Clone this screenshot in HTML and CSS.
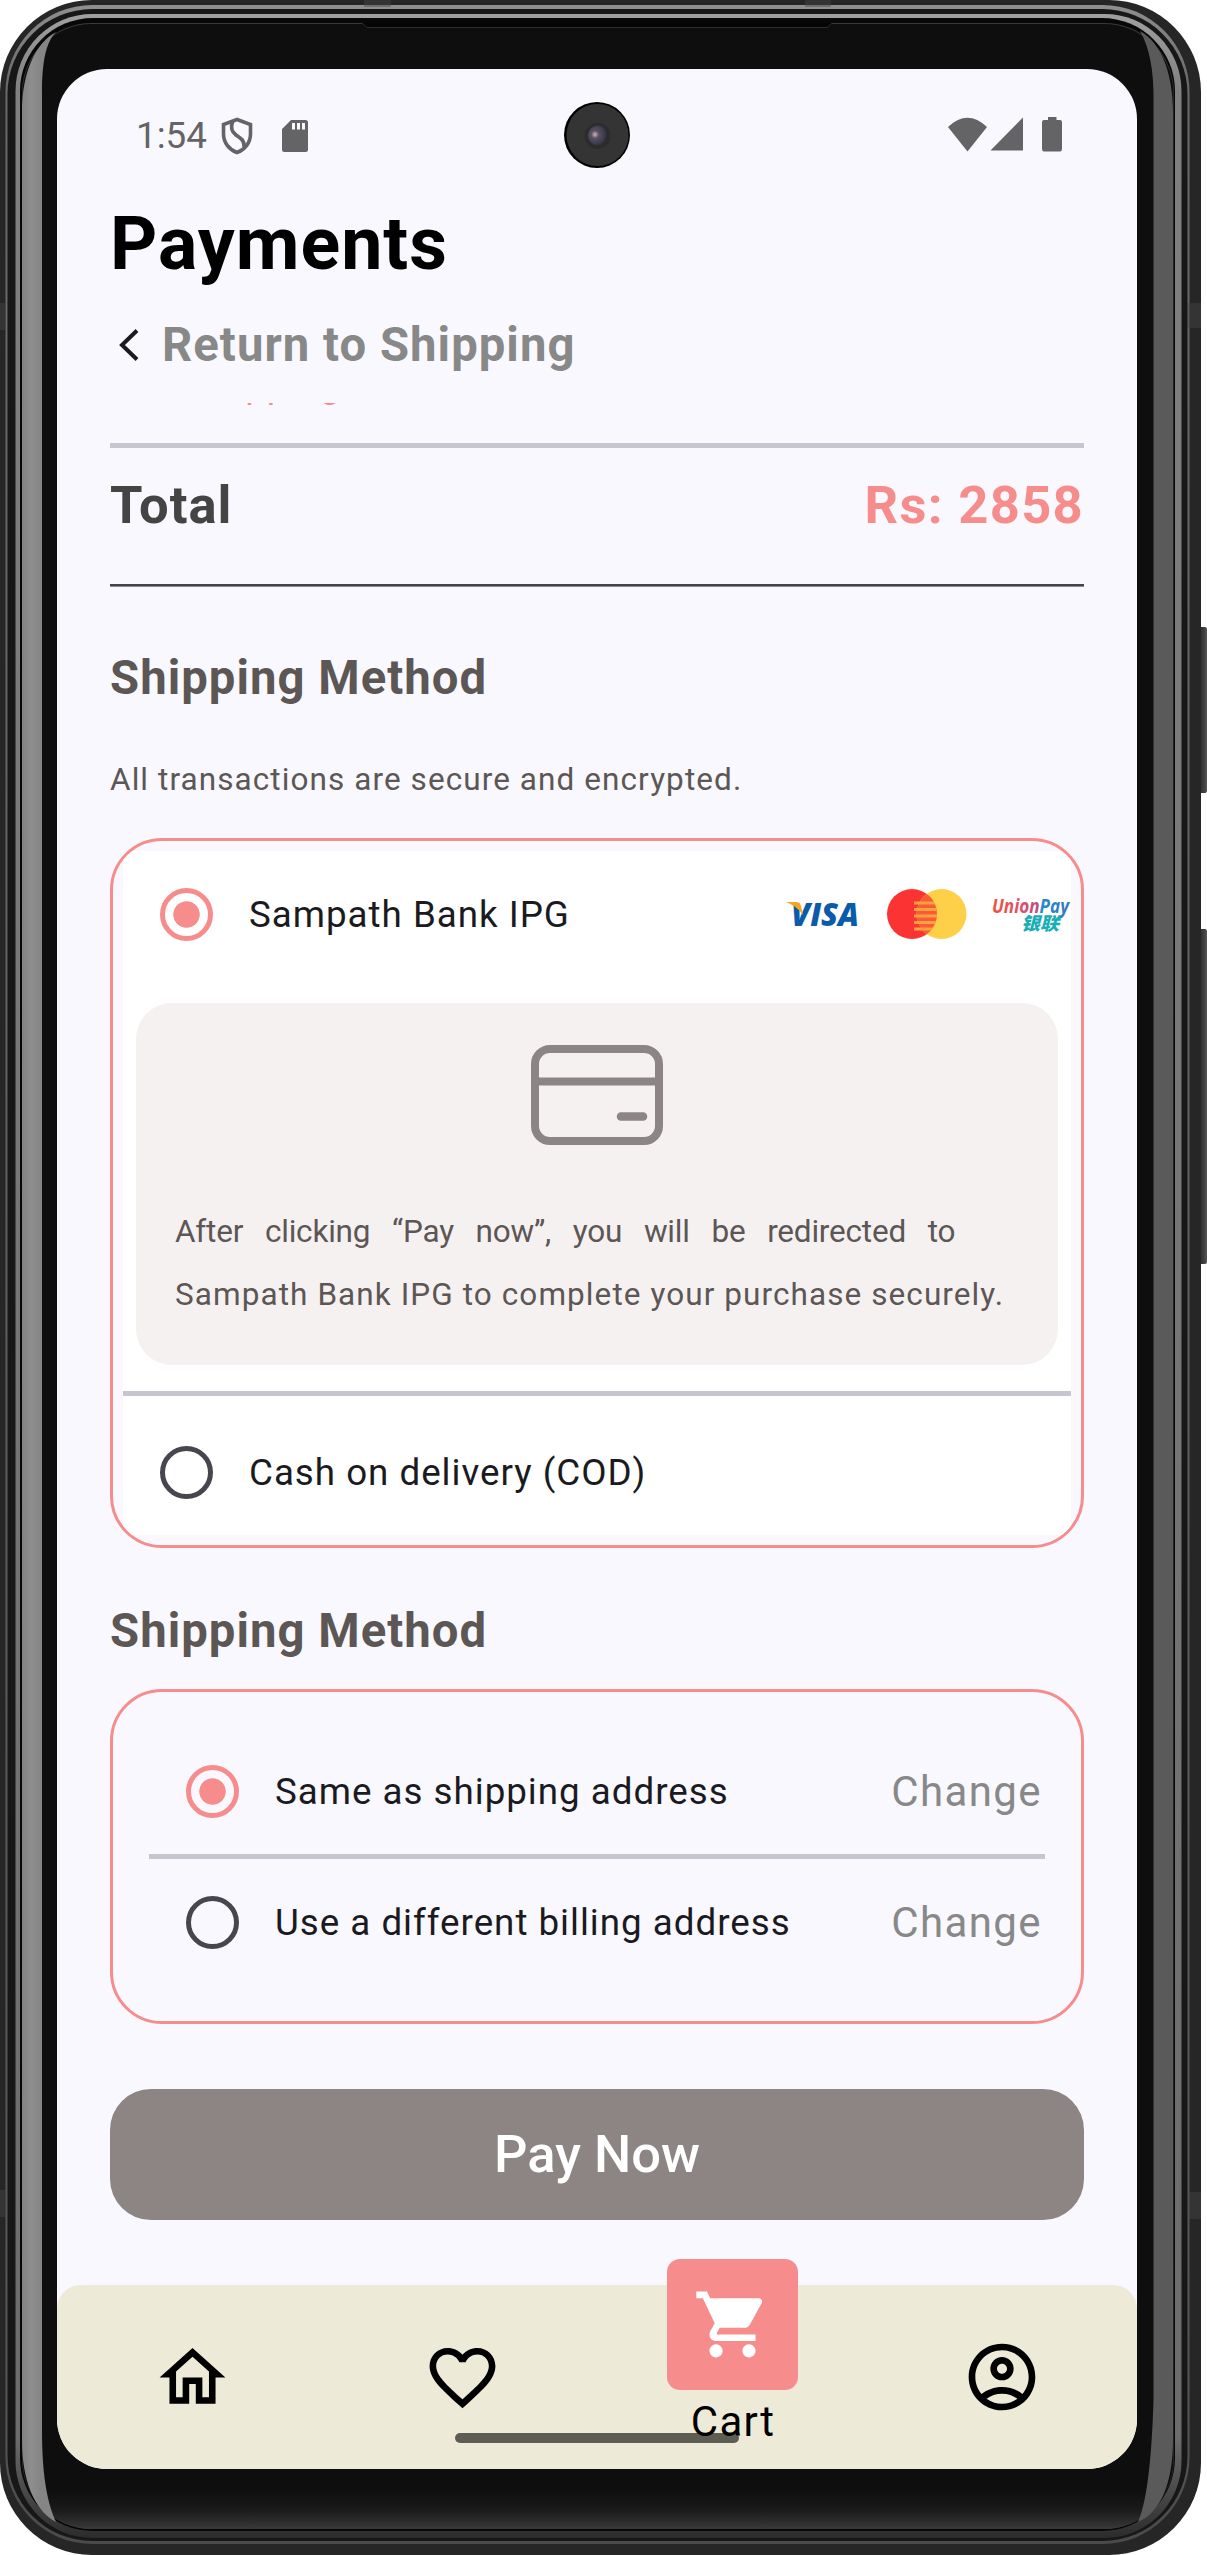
FILE: index.html
```html
<!DOCTYPE html>
<html lang="en">
<head>
<meta charset="utf-8">
<title>Payments</title>
<link rel="stylesheet" href="styles.css">
</head>
<body>
<div class="device">
  <svg class="frame" width="1207" height="2555" viewBox="0 0 1207 2555" aria-hidden="true">
    <defs>
      <linearGradient id="rim" x1="0" x2="0" y1="0" y2="1">
        <stop offset="0" stop-color="#8f8f8f"/><stop offset=".03" stop-color="#6a6a6a"/><stop offset=".96" stop-color="#555"/><stop offset="1" stop-color="#4a4a4a"/>
      </linearGradient>
      <linearGradient id="rim2" x1="0" x2="0" y1="0" y2="1">
        <stop offset="0" stop-color="#a0a0a0"/><stop offset=".03" stop-color="#808080"/><stop offset=".96" stop-color="#6c6c6c"/><stop offset="1" stop-color="#2c2c2c"/>
      </linearGradient>
      <linearGradient id="glass" x1="0" x2="0" y1="2490" y2="2530" gradientUnits="userSpaceOnUse">
        <stop offset="0" stop-color="#0e0e0e"/><stop offset=".5" stop-color="#1a1a1a"/><stop offset="1" stop-color="#3a3a3a"/>
      </linearGradient>
      <linearGradient id="left" x1="22" x2="41" y1="0" y2="0" gradientUnits="userSpaceOnUse">
        <stop offset="0" stop-color="#828282"/><stop offset=".5" stop-color="#8e8e8e"/><stop offset="1" stop-color="#858585"/>
      </linearGradient>
      <linearGradient id="key" x1="0" x2="1" y1="0" y2="0">
        <stop offset="0" stop-color="#1c1c1c"/><stop offset=".7" stop-color="#3a3a3a"/><stop offset="1" stop-color="#555"/>
      </linearGradient>
    </defs>
    <rect x="1194" y="627" width="13" height="166" rx="2" fill="url(#key)"/>
    <rect x="1194" y="929" width="13" height="335" rx="2" fill="url(#key)"/>
    <rect width="1201" height="2555" rx="92" fill="#262626"/>
    <rect x="5.5" y="5" width="1184" height="2539" rx="87" fill="url(#rim)"/>
    <rect x="7.5" y="9" width="1180" height="2532" rx="85" fill="#171717"/>
    <rect x="15.5" y="14" width="1166" height="2524" rx="77" fill="url(#rim2)"/>
    <rect x="20" y="18" width="1155" height="2513" rx="73" fill="#070707"/>
    <rect x="22" y="23" width="1152" height="2506" rx="70" fill="#3a3a3a"/>
    <rect x="22.5" y="24" width="1151" height="2505" rx="69.500" fill="url(#glass)"/>
    <path d="M56 32C46 42 42 62 42 92V2430C42 2470 46 2500 56 2522C34 2510 22 2480 22 2440V112C22 75 34 44 56 32Z" fill="url(#left)"/>
    <path d="M1140 31C1150 48 1153.500 72 1153.500 96V2400C1152 2450 1148 2500 1138 2522C1162 2512 1173 2480 1173 2440V112C1173 75 1162 43 1140 31Z" fill="#5a5a5a"/>
    <path d="M362 23L367 27.500H827L832 23Z" fill="#050505"/>
    <path d="M362 23L367 27.500H827L832 23" fill="none" stroke="#2c2c2c"/>
    <path d="M364 0H391V7H364ZM805 0H831V7H805ZM0 303H6V330H0ZM1188 303H1201V328H1188ZM0 2190H6V2217H0ZM1189 2192H1201V2219H1189Z" fill="#484848" fill-opacity=".45"/>
  </svg>

  <main class="screen">
    <header class="status">
      <span class="clock">1:54</span>
      <svg class="shield" width="32" height="38" viewBox="0 0 32 38"><path d="M16 2.500L29.500 7.500V17C29.500 25.500 24 32.500 16 35.500C8 32.500 2.500 25.500 2.500 17V7.500Z" fill="none" stroke="#646466" stroke-width="3.600"/><path d="M11.500 4.500C9.500 11 10.500 14.500 15 18C21 22 23.500 24 23 30" fill="none" stroke="#646466" stroke-width="3.800"/></svg>
      <svg class="sd" width="26" height="32" viewBox="0 0 26 32"><path fill-rule="evenodd" fill="#646466" d="M9 0H23.500Q26 0 26 2.500V29.500Q26 32 23.500 32H2.500Q0 32 0 29.500V9ZM10 3V9.500H13V3ZM15 3V9.500H18V3ZM20 3V9.500H23V3Z"/></svg>
      <svg class="camera" width="68" height="68" viewBox="0 0 68 68">
        <defs><radialGradient id="lens" cx=".35" cy=".45" r=".65"><stop offset="0" stop-color="#c9b5c4"/><stop offset=".3" stop-color="#5b5060"/><stop offset=".75" stop-color="#3b3a4c"/><stop offset="1" stop-color="#262626"/></radialGradient></defs>
        <circle cx="34" cy="34" r="33" fill="#000"/><circle cx="34.500" cy="34" r="31" fill="#343434"/><circle cx="34.500" cy="35" r="13" fill="#2c2c2c"/><circle cx="35" cy="34.500" r="10" fill="url(#lens)"/>
      </svg>
      <svg class="radio-icons" width="115" height="36" viewBox="0 0 115 36" fill="#646466"><path d="M0 10Q19.500-8.500 39 10L19.500 34.500Z"/><path d="M75 .5V33.500H42.500Z"/><path d="M100 0H108.500V3H112Q114 3 114 5V32Q114 34.500 112 34.500H96Q94 34.500 94 32V5Q94 3 96 3H100Z"/></svg>
    </header>

    <h1 class="title">Payments</h1>
    <a class="back">
      <svg width="20" height="32" viewBox="0 0 20 32"><path d="M18 1.500L3 16L18 30.500" fill="none" stroke="#1b1b1f" stroke-width="4"/></svg>
      <span>Return to Shipping</span>
    </a>

    <section class="content">
      <div class="scrolled"><span>Free shipping</span></div>
      <div class="rule"></div>
      <div class="total"><span>Total</span><span class="amount">Rs: 2858</span></div>
      <div class="rule rule-dark"></div>

      <h2 class="heading first">Shipping Method</h2>
      <p class="note">All transactions are secure and encrypted.</p>

      <div class="card payment">
        <div class="sheet">
          <div class="option">
            <span class="radio on"></span>
            <span class="label">Sampath Bank IPG</span>
            <svg class="brands" width="287" height="60" viewBox="0 0 287 60">
              <defs>
                <clipPath id="mc"><circle cx="128" cy="30" r="25"/></clipPath>
                <linearGradient id="up" x1="0" x2="1"><stop offset="0" stop-color="#f0503c"/><stop offset=".35" stop-color="#e25068"/><stop offset=".58" stop-color="#c04a80"/><stop offset=".62" stop-color="#2b87cc"/><stop offset="1" stop-color="#3a78b8"/></linearGradient>
              </defs>
              <text x="7" y="42" textLength="68" lengthAdjust="spacingAndGlyphs" class="visa">VISA</text>
              <path d="M2 18H12Q16 18 17 22L19 31Q13 22 2 18Z" fill="#f5a623"/>
              <circle cx="128" cy="30" r="25" fill="#fb3333"/><circle cx="157.500" cy="30" r="25" fill="#fed049"/>
              <g clip-path="url(#mc)"><circle cx="157.500" cy="30" r="25" fill="#fb5a35"/><path d="M130 19H155M130 25.500H155M130 32H155M130 38.500H155M130 45H155" stroke="#fda241" stroke-width="3"/></g>
              <text x="208" y="29" textLength="77" lengthAdjust="spacingAndGlyphs" class="union">UnionPay</text>
              <text x="237" y="46" textLength="38" lengthAdjust="spacingAndGlyphs" class="union-cn">银联</text>
            </svg>
          </div>
          <div class="panel">
            <svg width="134" height="102" viewBox="0 0 134 102" fill="none" stroke="#8c8585" stroke-width="8"><rect x="5" y="5" width="124" height="92" rx="15"/><path d="M5 37.500H129"/><path d="M91 72.500H113" stroke-linecap="round" stroke-width="8.500"/></svg>
            <p class="line wide">After clicking “Pay now”, you will be redirected to</p>
            <p class="line">Sampath Bank IPG to complete your purchase securely.</p>
          </div>
          <div class="rule"></div>
          <div class="option cod">
            <span class="radio"></span>
            <span class="label">Cash on delivery (COD)</span>
          </div>
        </div>
      </div>

      <h2 class="heading second">Shipping Method</h2>
      <div class="card address">
        <div class="option"><span class="radio on"></span><span class="label">Same as shipping address</span><a class="change">Change</a></div>
        <div class="rule"></div>
        <div class="option"><span class="radio"></span><span class="label">Use a different billing address</span><a class="change">Change</a></div>
      </div>

      <button class="pay">Pay Now</button>
    </section>

    <nav class="tabs">
      <a class="tab"><svg width="79" height="79" viewBox="0 0 24 24"><path d="M12 5.690l5 4.500V18h-2v-6H9v6H7v-7.810l5-4.500M12 3L2 12h3v8h6v-6h2v6h6v-8h3L12 3z"/></svg></a>
      <a class="tab"><svg width="79" height="79" viewBox="0 0 24 24"><path d="M16.500 3c-1.740 0-3.410.81-4.500 2.090C10.910 3.810 9.240 3 7.500 3 4.420 3 2 5.420 2 8.500c0 3.780 3.400 6.860 8.550 11.540L12 21.350l1.450-1.320C18.600 15.360 22 12.280 22 8.500 22 5.420 19.580 3 16.500 3zm-4.400 15.550l-.1.100-.1-.1C7.140 14.240 4 11.390 4 8.500 4 6.500 5.500 5 7.500 5c1.540 0 3.040.99 3.570 2.360h1.870C13.460 5.990 14.960 5 16.500 5c2 0 3.500 1.500 3.500 3.500 0 2.890-3.140 5.740-7.900 10.050z"/></svg></a>
      <a class="tab active"><span class="tile"><svg width="79" height="79" viewBox="0 0 24 24"><path d="M7 18c-1.100 0-1.990.9-1.990 2S5.900 22 7 22s2-.9 2-2-.9-2-2-2zM1 2v2h2l3.600 7.590-1.350 2.450c-.16.280-.25.610-.25.960 0 1.100.9 2 2 2h12v-2H7.420c-.14 0-.25-.11-.25-.25l.03-.12.900-1.630h7.450c.75 0 1.410-.41 1.750-1.030l3.580-6.490c.08-.14.120-.31.120-.48 0-.55-.45-1-1-1H5.210l-.94-2H1zm16 16c-1.100 0-1.990.9-1.990 2s.89 2 1.990 2 2-.9 2-2-.9-2-2-2z" fill="#fff"/></svg></span><span class="tab-label">Cart</span></a>
      <a class="tab"><svg width="80" height="80" viewBox="0 0 24 24"><path d="M12 2C6.480 2 2 6.480 2 12s4.480 10 10 10 10-4.480 10-10S17.520 2 12 2zM7.350 18.500C8.660 17.560 10.260 17 12 17s3.340.56 4.650 1.500C15.340 19.440 13.740 20 12 20s-3.340-.56-4.650-1.500zm10.790-1.380C16.450 15.800 14.320 15 12 15s-4.450.8-6.140 2.120C4.700 15.730 4 13.950 4 12c0-4.420 3.580-8 8-8s8 3.580 8 8c0 1.950-.7 3.730-1.860 5.120zM12 6c-1.930 0-3.500 1.570-3.500 3.500S10.070 13 12 13s3.500-1.570 3.500-3.500S13.930 6 12 6zm0 5c-.83 0-1.500-.67-1.500-1.500S11.170 8 12 8s1.500.67 1.500 1.500S12.830 11 12 11z"/></svg></a>
      <span class="home-pill"></span>
    </nav>
  </main>
</div>
</body>
</html>
```
FILE: styles.css
```css
* { box-sizing: border-box; margin: 0; padding: 0; }
body { background: #fff; font-family: Roboto, sans-serif; color: #1b1b1f; }
svg { display: block; flex: none; }

.device { display: grid; width: 1207px; height: 2555px; overflow: hidden; }
.frame, .screen { grid-area: 1 / 1; }
.screen {
  width: 1080px; height: 2400px; margin: 69px 0 0 57px;
  background: #f9f8ff; border-radius: 50px; overflow: hidden;
}

.status { display: flex; align-items: center; height: 132px; padding: 0 74px 0 79px; position: relative; }
.clock { font-size: 36.75px; line-height: 63px; color: #646466; width: 84px; white-space: nowrap; }
.shield { margin: 2px 0 0 1px; }
.sd { margin: 2px 0 0 29px; }
.camera { position: absolute; left: 506px; top: 32px; }
.radio-icons { margin-left: auto; }

.title { height: 85px; padding-left: 53px; font-size: 73.5px; line-height: 87px; font-weight: 700; color: #000; letter-spacing: 1px; }
.back { display: flex; align-items: center; height: 117px; padding-left: 62px; gap: 23px; font-size: 47.25px; font-weight: 700; color: #888; letter-spacing: 1.04px; }
.back span { padding-top: 1px; }

.content { padding: 0 53px; }
.scrolled { height: 40px; overflow: hidden; font-size: 36.75px; line-height: 40px; color: #f78c8c; letter-spacing: 1px; }
.scrolled span { display: block; margin: -38px 0 0 -1px; }
.rule { height: 5px; background: #c6c6d0; }
.rule-dark { height: 3px; background: #444; border-bottom: 1px solid #8e8e90; }
.total { display: flex; justify-content: space-between; height: 136px; font-size: 52.5px; line-height: 114px; font-weight: 700; color: #444; letter-spacing: 1px; }
.total .amount { color: #f78c8c; letter-spacing: 1.31px; }
.heading { font-size: 47.25px; line-height: 65px; height: 63px; font-weight: 700; color: #5c5755; letter-spacing: 1.04px; }
.first { margin-top: 59px; }
.second { margin-top: 51px; }
.note { margin-top: 39px; height: 63px; font-size: 31.5px; line-height: 64px; color: #5c5755; letter-spacing: 1.08px; }

.card { border: 3px solid #f78c8c; border-radius: 52px; overflow: hidden; }
.payment { margin-top: 27px; height: 710px; padding: 10px; }
.sheet { background: #fff; height: 684px; }
.option { display: flex; align-items: center; height: 126px; padding-left: 37px; }
.cod { margin-top: 13px; }
.radio { flex: none; width: 53px; height: 53px; border: 5.5px solid #46464f; border-radius: 50%; }
.radio.on { border-color: #f78c8c; background: radial-gradient(circle, #f78c8c 12.800px, transparent 13.600px); }
.label { margin-left: 36px; font-size: 36.75px; line-height: 63px; letter-spacing: .98px; white-space: nowrap; }
.brands { margin-left: auto; }
.visa { font: italic 800 32px "Open Sans", sans-serif; fill: #0b5bab; }
.union { font: italic 700 20px "Open Sans", sans-serif; fill: url(#up); }
.union-cn { font: italic 900 18px "Noto Sans CJK SC", sans-serif; fill: #18aeb4; }

.panel { margin: 26px 13px; height: 362px; padding: 41px 39px 0; background: #f6f1f1; border-radius: 36px; }
.panel svg { margin: 0 auto 54px; }
.line { font-size: 31.5px; line-height: 63px; color: #5c5755; letter-spacing: 1.08px; white-space: nowrap; }
.wide { letter-spacing: -.2px; word-spacing: 14.1px; }

.address { margin-top: 27px; height: 335px; padding: 36px; }
.change { margin-left: auto; padding-right: 3px; font-size: 42px; line-height: 63px; color: #888; letter-spacing: 1.4px; }

.pay { display: block; width: 100%; height: 131px; margin-top: 65px; padding-bottom: 2px; border: 0; border-radius: 41px; background: #8c8584; color: #fff; font: 500 52.5px Roboto, sans-serif; }

.tabs { position: relative; display: grid; grid-template-columns: repeat(4, 1fr); height: 184px; margin-top: 65px; background: #eeead8; border-radius: 24px 24px 0 0; }
.tab { display: flex; align-items: center; justify-content: center; position: relative; z-index: 1; }
.active { flex-direction: column; justify-content: flex-start; margin-top: -26px; }
.tile { display: flex; align-items: center; justify-content: center; flex: none; width: 131px; height: 131px; border-radius: 13px; background: #f78c8c; }
.tab-label { padding-left: 2px; font-size: 42px; line-height: 63px; color: #000; letter-spacing: 1.31px; }
.home-pill { position: absolute; left: 398px; top: 148px; width: 284px; height: 10px; border-radius: 5px; background: #5e5d54; }
```
